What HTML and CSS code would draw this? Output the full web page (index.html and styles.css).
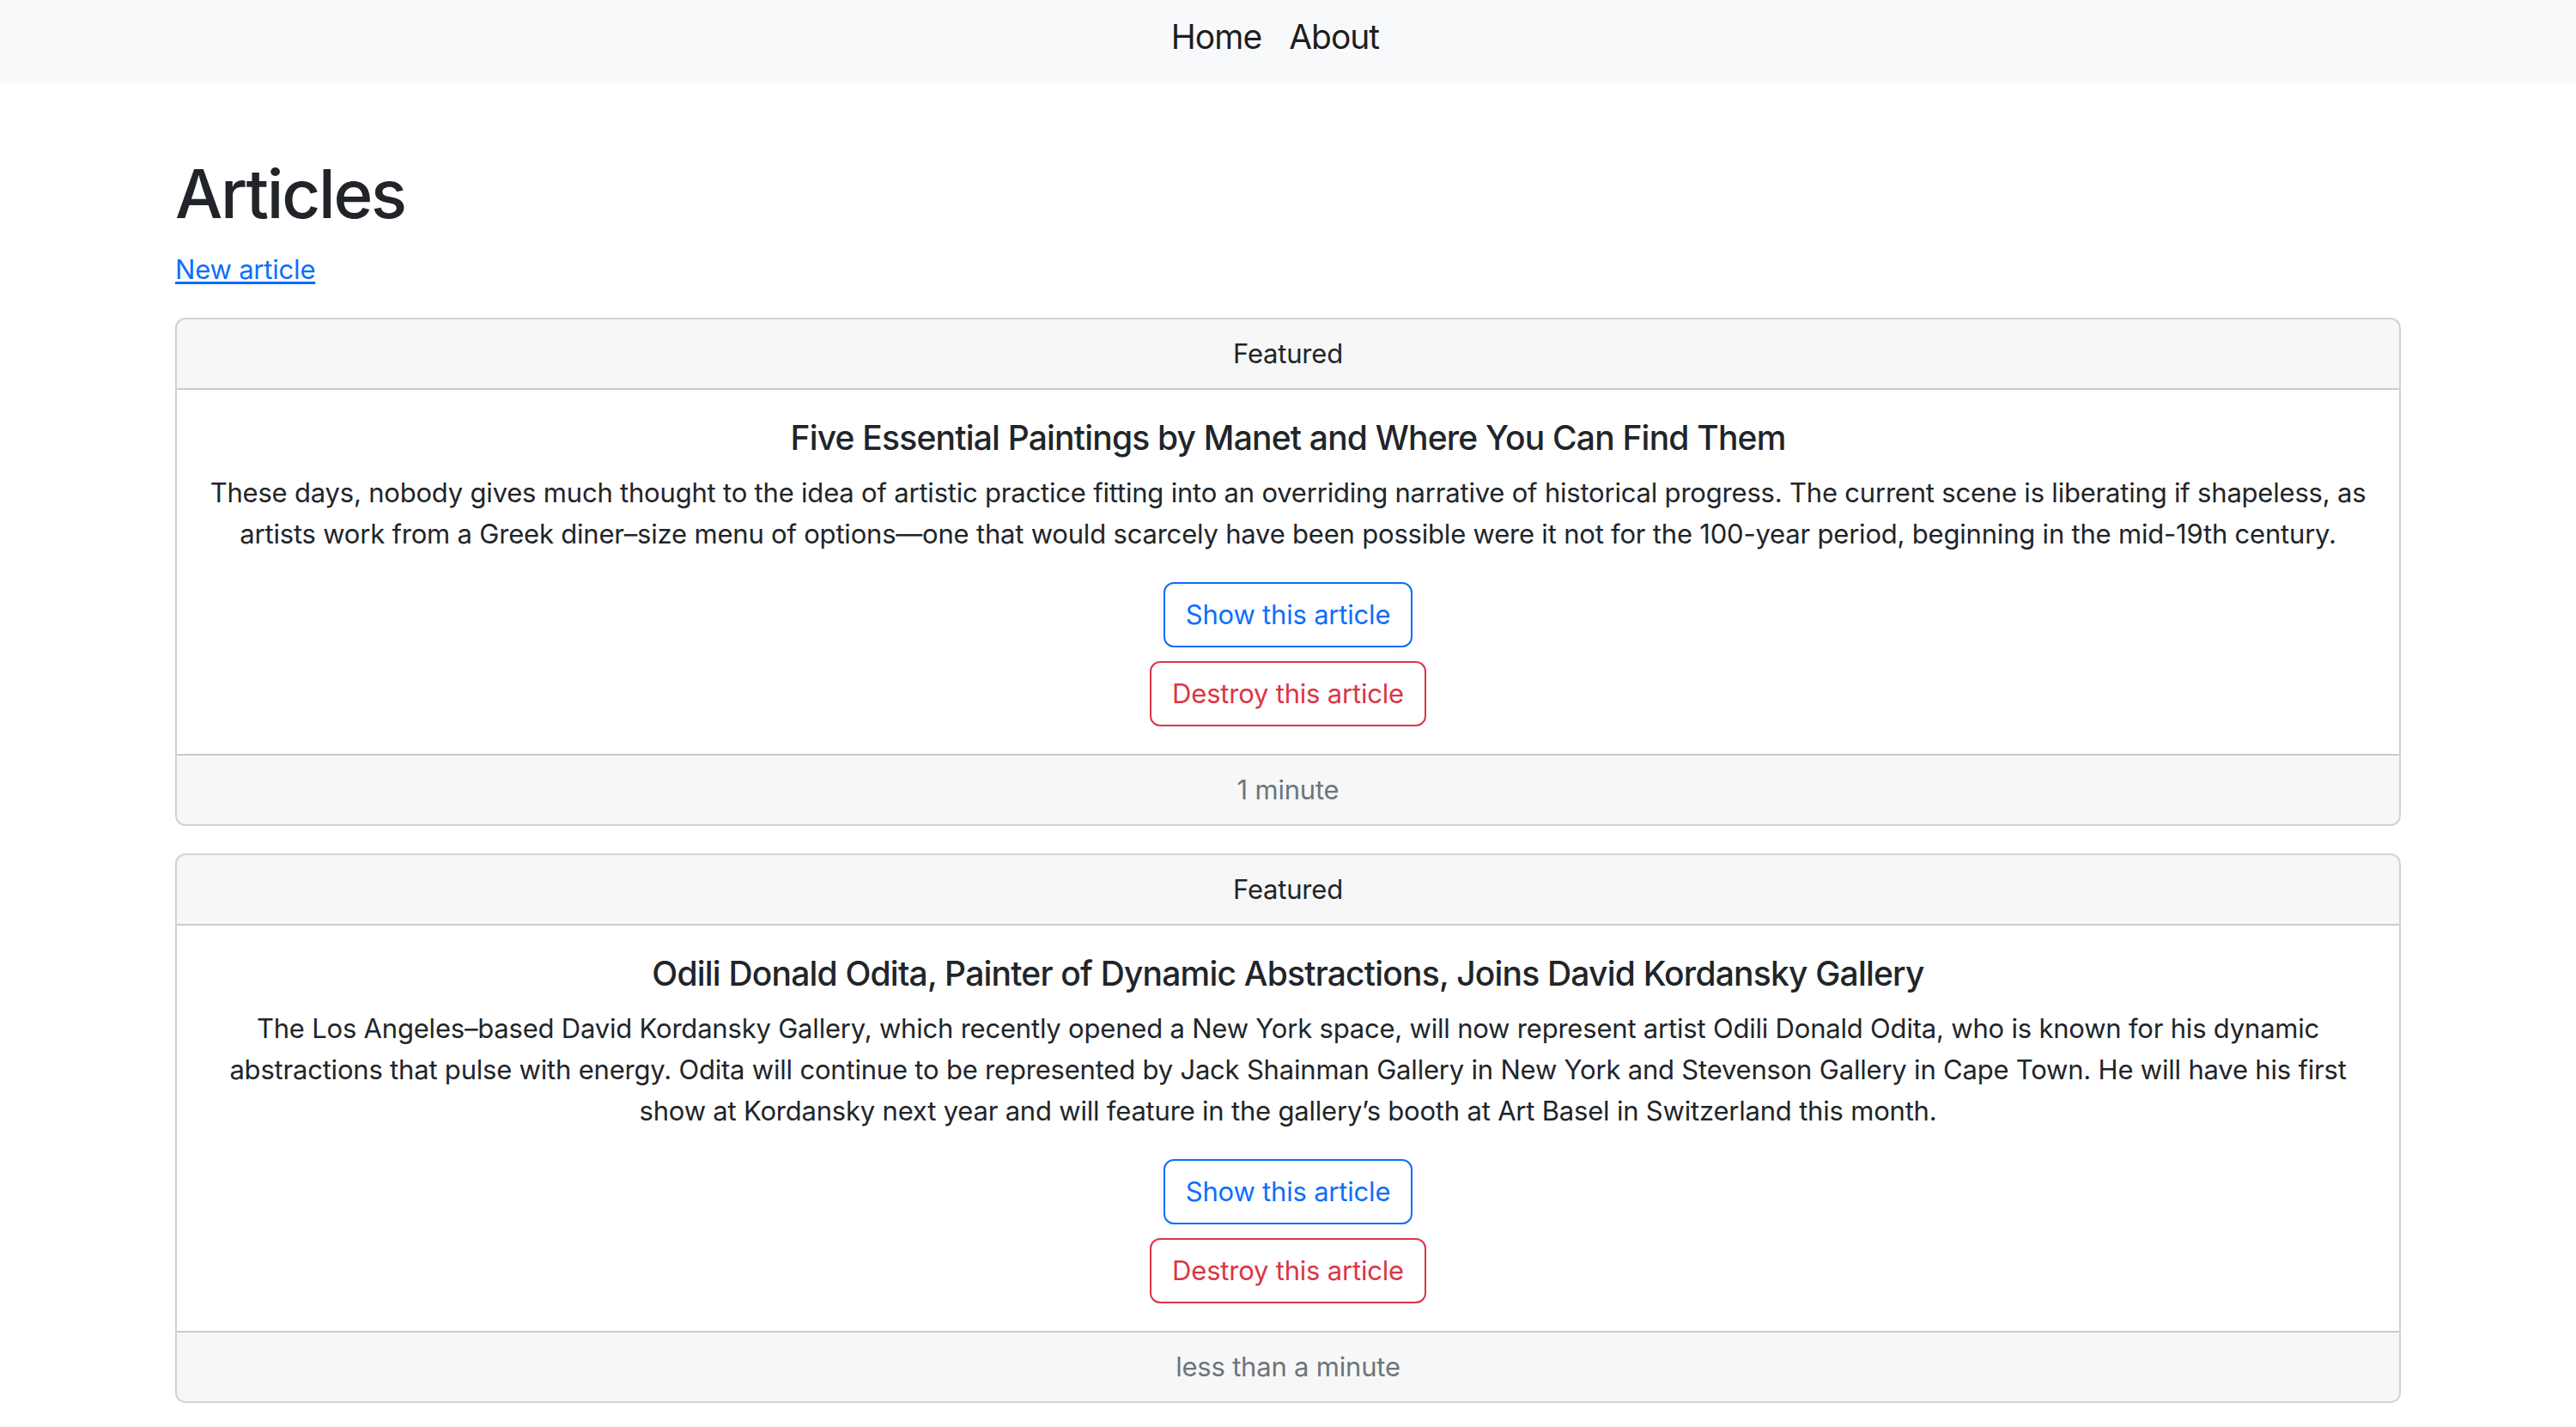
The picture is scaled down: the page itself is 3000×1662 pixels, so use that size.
FILE: index.html
```html
<!DOCTYPE html>
<html lang="en">
<head>
<meta charset="utf-8">
<title>Articles</title>
<link rel="stylesheet" href="styles.css">
</head>
<body>
<nav class="navbar">
  <a class="nav-link" href="#">Home</a>
  <a class="nav-link" href="#">About</a>
</nav>
<main class="container">
  <h1 class="page-title">Articles</h1>
  <p class="new-link"><a href="#">New article</a></p>

  <div class="card">
    <div class="card-header">Featured</div>
    <div class="card-body">
      <h5 class="card-title">Five Essential Paintings by Manet and Where You Can Find Them</h5>
      <p class="card-text">These days, nobody gives much thought to the idea of artistic practice fitting into an overriding narrative of historical progress. The current scene is liberating if shapeless, as artists work from a Greek diner–size menu of options—one that would scarcely have been possible were it not for the 100-year period, beginning in the mid-19th century.</p>
      <div class="actions">
        <a class="btn btn-primary" href="#">Show this article</a>
        <button class="btn btn-danger" type="button">Destroy this article</button>
      </div>
    </div>
    <div class="card-footer">1 minute</div>
  </div>

  <div class="card">
    <div class="card-header">Featured</div>
    <div class="card-body">
      <h5 class="card-title">Odili Donald Odita, Painter of Dynamic Abstractions, Joins David Kordansky Gallery</h5>
      <p class="card-text">The Los Angeles–based David Kordansky Gallery, which recently opened a New York space, will now represent artist Odili Donald Odita, who is known for his dynamic abstractions that pulse with energy. Odita will continue to be represented by Jack Shainman Gallery in New York and Stevenson Gallery in Cape Town. He will have his first show at Kordansky next year and will feature in the gallery’s booth at Art Basel in Switzerland this month.</p>
      <div class="actions">
        <a class="btn btn-primary" href="#">Show this article</a>
        <button class="btn btn-danger" type="button">Destroy this article</button>
      </div>
    </div>
    <div class="card-footer">less than a minute</div>
  </div>
</main>
</body>
</html>
```
FILE: styles.css
```css
* { box-sizing: border-box; }
html, body {
  margin: 0;
  padding: 0;
  background: #fff;
}
body {
  font-family: Inter, "Noto Sans", "Liberation Sans", sans-serif;
  font-size: 31px;
  line-height: 48px;
  letter-spacing: -0.2px;
  color: #212529;
}
.navbar {
  background: #f8f9fa;
  height: 97px;
  display: flex;
  justify-content: center;
  align-items: flex-start;
  padding: 13px 30px 0 0;
}
.nav-link {
  font-size: 39px;
  line-height: 60px;
  letter-spacing: -1px;
  color: rgba(0, 0, 0, 0.9);
  text-decoration: none;
  padding: 0 16px;
}
.container {
  max-width: 2640px;
  margin: 0 auto;
  padding: 81px 24px 0;
}
.page-title {
  font-size: 78px;
  font-weight: 500;
  line-height: 96px;
  letter-spacing: -2.2px;
  margin: 0 0 16px;
}
.new-link {
  margin: 0 0 32px;
}
.new-link a {
  color: #0d6efd;
  text-decoration: underline;
  text-underline-offset: 3px;
}
.card {
  border: 2px solid rgba(0, 0, 0, 0.175);
  border-radius: 12px;
  margin-bottom: 32px;
  overflow: hidden;
  text-align: center;
}
.card-header {
  background: rgba(0, 0, 0, 0.03);
  border-bottom: 2px solid rgba(0, 0, 0, 0.175);
  padding: 16px 32px;
}
.card-body {
  padding: 32px;
}
.card-title {
  font-size: 39px;
  font-weight: 500;
  line-height: 48px;
  letter-spacing: -0.8px;
  margin: 0 0 16px;
}
.card-text {
  margin: 0 0 32px;
}
.actions {
  display: flex;
  flex-direction: column;
  align-items: center;
  gap: 16px;
}
.btn {
  display: inline-block;
  font-family: inherit;
  font-size: 31px;
  line-height: 48px;
  letter-spacing: -0.2px;
  padding: 12px 24px;
  border: 2px solid;
  border-radius: 12px;
  background: transparent;
  text-decoration: none;
  cursor: pointer;
}
.btn-primary {
  color: #0d6efd;
  border-color: #0d6efd;
}
.btn-danger {
  color: #dc3545;
  border-color: #dc3545;
}
.card-footer {
  background: rgba(0, 0, 0, 0.03);
  border-top: 2px solid rgba(0, 0, 0, 0.175);
  padding: 16px 32px;
  color: #6c757d;
}
```
